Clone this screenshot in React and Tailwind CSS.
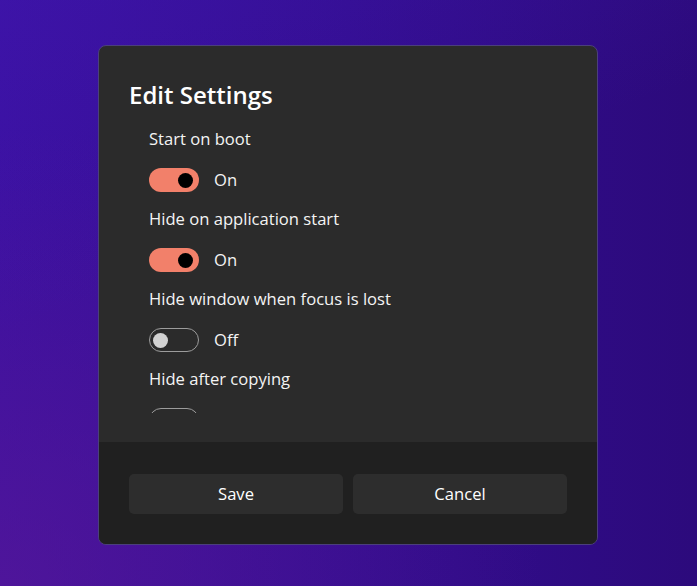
import React from "react";

function Toggle({ on }) {
  if (on) {
    return (
      <div className="w-[50px] h-[24px] rounded-full bg-[#f2806a] flex items-center justify-end pr-[6.5px]">
        <div className="w-[15px] h-[15px] rounded-full bg-black" />
      </div>
    );
  }
  return (
    <div className="w-[50px] h-[24px] rounded-full border-[1.5px] border-[#9c9c9c] flex items-center pl-[2.5px]">
      <div className="w-[15px] h-[15px] rounded-full bg-[#d2d2d2]" />
    </div>
  );
}

function Row({ label, on, hideState }) {
  return (
    <div className="flex flex-col">
      <div className="h-[24px] leading-[24px] mb-[17px] whitespace-nowrap">{label}</div>
      <div className="h-[24px] mb-[15px] flex items-center gap-[15px]">
        <Toggle on={on} />
        {!hideState && <span className="leading-[24px]">{on ? "On" : "Off"}</span>}
      </div>
    </div>
  );
}

export default function App() {
  return (
    <div className="w-[697px] h-[586px] relative overflow-hidden bg-[linear-gradient(90deg,#3a10a0_0%,#330d90_50%,#2c0a7c_100%)] font-['Open_Sans','Noto_Sans',sans-serif] text-white">
      <div className="absolute inset-0 bg-[radial-gradient(ellipse_at_0%_100%,rgba(95,25,150,0.55),transparent_55%)]" />
      <div className="absolute inset-0 bg-[linear-gradient(160deg,rgba(70,30,190,0.25)_0%,transparent_40%)]" />
      <div className="relative flex justify-center pt-[45px] pr-[1px]">
        <div className="w-[500px] h-[500px] rounded-[8px] border border-[#4b3f7c] bg-[#2b2b2b] flex flex-col overflow-hidden">
          <div className="flex-1 flex flex-col pt-[33px] px-[30px] pb-[29px] min-h-0">
            <div className="text-[24px] leading-[32px] font-semibold h-[32px]">Edit Settings</div>
            <div className="mt-[16px] flex-1 min-h-0 overflow-hidden pl-[20px] text-[16.6px] text-[#f4f4f4]">
              <Row label="Start on boot" on={true} />
              <Row label="Hide on application start" on={true} />
              <Row label="Hide window when focus is lost" on={false} />
              <Row label="Hide after copying" on={false} hideState={true} />
            </div>
          </div>
          <div className="h-[102px] bg-[#202020] pt-[32px] px-[30px] flex gap-[10px]">
            <button className="w-[214px] h-[40px] rounded-[5px] bg-[#2d2d2d] text-[16.6px] text-white">Save</button>
            <button className="w-[214px] h-[40px] rounded-[5px] bg-[#2d2d2d] text-[16.6px] text-white">Cancel</button>
          </div>
        </div>
      </div>
    </div>
  );
}
